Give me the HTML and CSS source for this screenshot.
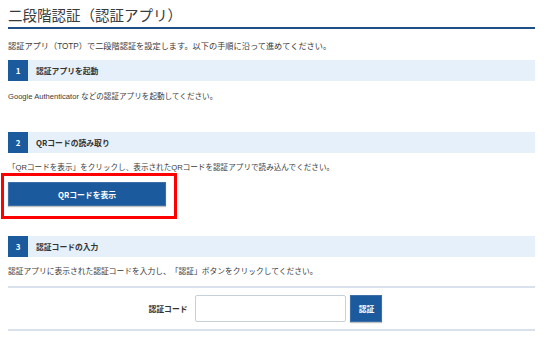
FILE: index.html
```html
<!DOCTYPE html>
<html lang="ja">
  <head>
    <meta charset="UTF-8" />
    <meta name="viewport" content="width=device-width, initial-scale=1.0" />
    <title>二段階認証（認証アプリ）</title>
    <link rel="stylesheet" href="styles.css">
  </head>
  <body>
    <div class="page">
      <h1 class="page-title">二段階認証（認証アプリ）</h1>
      <p class="intro">認証アプリ（TOTP）で二段階認証を設定します。以下の手順に沿って進めてください。</p>

      <!-- Step 1 -->
      <div class="step">
        <div class="step-head">
          <span class="step-num">1</span>
          <span class="step-title">認証アプリを起動</span>
        </div>
        <p class="step-text">Google Authenticator などの認証アプリを起動してください。</p>
      </div>

      <!-- Step 2 -->
      <div class="step step-qr">
        <div class="step-head">
          <span class="step-num">2</span>
          <span class="step-title">QRコードの読み取り</span>
        </div>
        <p class="step-text">「QRコードを表示」をクリックし、表示されたQRコードを認証アプリで読み込んでください。</p>
        <div class="qr-action">
          <button class="btn btn-qr" id="showQrBtn">QRコードを表示</button>
          <span class="highlight"></span>
        </div>
      </div>

      <!-- Step 3 -->
      <div class="step step-code">
        <div class="step-head">
          <span class="step-num">3</span>
          <span class="step-title">認証コードの入力</span>
        </div>
        <p class="step-text">認証アプリに表示された認証コードを入力し、「認証」ボタンをクリックしてください。</p>
        <form class="code-form" onsubmit="return false;">
          <label class="code-label" for="code">認証コード</label>
          <input class="code-input" id="code" type="text" />
          <button class="btn btn-verify" type="submit">認証</button>
        </form>
      </div>
    </div>
  </body>
</html>
```

FILE: styles.css
```css
* {
  margin: 0;
  padding: 0;
  box-sizing: border-box;
}

body {
  background: #fff;
  color: #3a3a3a;
  font-family: 'Noto Sans CJK JP', 'Noto Sans', sans-serif;
  text-spacing-trim: space-all;
}
.page {
  width: 527px;
  margin-left: 8px;
}
.page-title {
  margin-top: 5px;
  font-size: 14.5px;
  line-height: 20px;
  font-weight: 400;
  color: #3a3a3a;
  padding-bottom: 2px;
  border-bottom: 2px solid #1e4f86;
}
.intro,
.step-text {
  font-family: 'Liberation Sans', 'Noto Sans CJK JP', sans-serif;
  line-height: 14px;
}
.intro {
  margin-top: 11px;
  font-size: 8.2px;
}
.step {
  margin-top: 6px;
}
.step-qr {
  margin-top: 28px;
}
.step-code {
  margin-top: 30px;
}
.step-head {
  display: flex;
  align-items: center;
  height: 21px;
  background: #e6f0fa;
}
.step-num {
  width: 20px;
  height: 21px;
  background: #1b5a9c;
  color: #fff;
  font-size: 8px;
  font-weight: 700;
  display: flex;
  align-items: center;
  justify-content: center;
}
.step-title {
  margin-left: 8px;
  font-size: 7.8px;
  font-weight: 700;
  color: #333;
}
.step-text {
  margin-top: 8px;
  font-size: 7.6px;
}
.step:first-of-type .step-text {
  margin-top: 9px;
}
.step-code .step-text {
  font-size: 7.75px;
}
.qr-action {
  position: relative;
  margin-top: 7px;
  width: 158px;
}
.btn {
  background: #1b5a9c;
  color: #fff;
  border: 1px solid #3d70a8;
  font-family: inherit;
  font-weight: 700;
  cursor: pointer;
  box-shadow: 0 1px 1px rgba(0,0,0,0.25);
}
.btn-qr {
  display: block;
  width: 158px;
  height: 24px;
  font-size: 7.8px;
}
.highlight {
  position: absolute;
  left: -7px;
  top: -9px;
  right: -11px;
  bottom: -13px;
  border: 3px solid #f00;
  pointer-events: none;
}
.code-form {
  margin-top: 7px;
  border-top: 2px solid #d9e2ec;
  border-bottom: 2px solid #d9e2ec;
  padding: 7px 12px 7px 0;
  display: flex;
  align-items: center;
  justify-content: center;
}
.code-label {
  font-size: 7.8px;
  font-weight: 700;
  color: #333;
  margin-right: 8px;
}
.code-input {
  width: 151px;
  height: 27px;
  border: 1px solid #c6d0da;
  border-radius: 2px;
  background: #fff;
}
.btn-verify {
  margin-left: 4px;
  width: 32px;
  height: 27px;
  font-size: 7.8px;
}
```
